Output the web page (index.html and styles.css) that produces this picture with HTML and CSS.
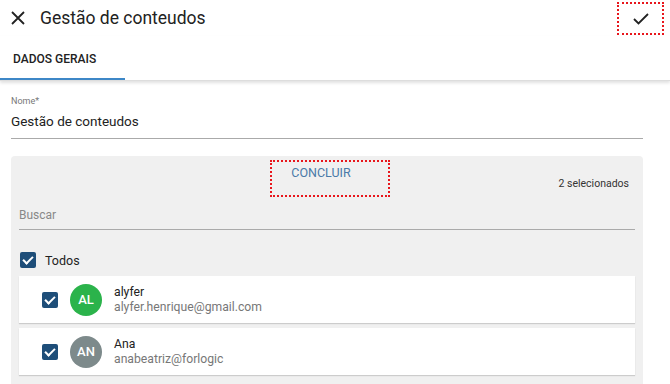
FILE: index.html
```html
<!DOCTYPE html>
<html lang="pt">
<head>
  <meta charset="UTF-8">
  <title>Gestão de conteudos</title>
  <link rel="stylesheet" href="styles.css">
</head>
<body>
  <header class="topbar">
    <div class="topbar-left">
      <svg class="icon-close" width="14" height="14" viewBox="0 0 14 14">
        <path d="M1 1 L13 13 M13 1 L1 13" stroke="#222" stroke-width="1.8" fill="none"/>
      </svg>
      <h1>Gestão de conteudos</h1>
    </div>
    <button class="btn-save">
      <svg width="16" height="12" viewBox="0 0 16 12">
        <path d="M1 6 L5.5 10.5 L15 1" stroke="#222" stroke-width="1.8" fill="none"/>
      </svg>
    </button>
  </header>

  <nav class="tabs">
    <div class="tab active">DADOS GERAIS</div>
  </nav>

  <main class="content">
    <div class="field">
      <label>Nome*</label>
      <div class="field-value">Gestão de conteudos</div>
    </div>

    <section class="panel">
      <div class="panel-head">
        <span></span>
        <button class="btn-done">CONCLUIR</button>
        <span class="count">2 selecionados</span>
      </div>

      <div class="search">Buscar</div>

      <div class="check-all">
        <span class="checkbox"></span>
        <span>Todos</span>
      </div>

      <div class="user">
        <span class="checkbox"></span>
        <span class="avatar green">AL</span>
        <div class="user-info">
          <div class="user-name">alyfer</div>
          <div class="user-mail">alyfer.henrique@gmail.com</div>
        </div>
      </div>

      <div class="user">
        <span class="checkbox"></span>
        <span class="avatar grey">AN</span>
        <div class="user-info">
          <div class="user-name">Ana</div>
          <div class="user-mail">anabeatriz@forlogic</div>
        </div>
      </div>
    </section>
  </main>
</body>
</html>
```

FILE: styles.css
```css
body {
  margin: 0;
  background: #fff;
  color: #222;
  font-family: Roboto, "Noto Sans", sans-serif;
  overflow: hidden;
}

.topbar {
  display: flex;
  align-items: center;
  justify-content: space-between;
  height: 36px;
  padding: 0 6px 0 11px;
}

.topbar-left {
  display: flex;
  align-items: center;
  gap: 15px;
}

.topbar h1 {
  margin: 0;
  font-size: 17.5px;
  font-weight: 400;
  color: #222;
}

.btn-save {
  width: 47px;
  height: 33px;
  margin-top: 1px;
  display: flex;
  align-items: center;
  justify-content: center;
  background: none;
  border: 2px dotted #e8161c;
  padding: 0;
}

.tabs {
  height: 44px;
  display: flex;
  border-bottom: 1px solid #ddd;
  box-shadow: 0 2px 3px rgba(0, 0, 0, 0.12);
}

.tab {
  width: 125px;
  box-sizing: border-box;
  padding: 16px 0 0 13px;
  font-size: 12px;
  font-weight: 500;
  color: #222;
}

.tab.active {
  border-bottom: 2px solid #3d87c7;
}

.content {
  padding: 14px 27px 0 11px;
}

.field label {
  display: block;
  font-size: 9px;
  color: #777;
  line-height: 12px;
}

.field-value {
  font-size: 13.5px;
  line-height: 18px;
  padding: 5px 0 8px;
  border-bottom: 1px solid #aaa;
}

.panel {
  margin-top: 17px;
  background: #f0f0f0;
  border-radius: 4px;
  padding: 4px 8px 10px;
}

.panel-head {
  display: grid;
  grid-template-columns: 1fr auto 1fr;
  align-items: end;
}

.btn-done {
  width: 120px;
  height: 37px;
  margin-left: 6px;
  background: none;
  border: 2px dotted #e8161c;
  color: #4a7aa8;
  font-family: Roboto, sans-serif;
  font-size: 12.5px;
  padding: 0 18px 12px 0;
}

.count {
  text-align: right;
  font-size: 10.5px;
  color: #333;
  padding: 0 6px 7px 0;
}

.search {
  margin-top: 11px;
  font-size: 12px;
  color: #888;
  padding-bottom: 7px;
  border-bottom: 1px solid #aaa;
}

.check-all {
  display: flex;
  align-items: center;
  gap: 9px;
  height: 32px;
  margin-top: 14px;
  padding-left: 1px;
  font-size: 12.5px;
}

.checkbox {
  width: 16px;
  height: 16px;
  border-radius: 2px;
  background: #1e4e79;
  position: relative;
  flex: none;
}

.checkbox::after {
  content: "";
  position: absolute;
  left: 5px;
  top: 2px;
  width: 4px;
  height: 8px;
  border: solid #fff;
  border-width: 0 2px 2px 0;
  transform: rotate(45deg);
}

.user {
  display: flex;
  align-items: center;
  height: 47px;
  margin-bottom: 5px;
  padding-left: 23px;
  background: #fff;
  box-shadow: 0 1px 1px rgba(0, 0, 0, 0.15);
}

.avatar {
  width: 32px;
  height: 32px;
  border-radius: 50%;
  margin-left: 12px;
  display: flex;
  align-items: center;
  justify-content: center;
  color: #fff;
  font-size: 13px;
  font-weight: 500;
}

.avatar.green {
  background: #2bb34b;
}

.avatar.grey {
  background: #7d8a8b;
}

.user-info {
  margin-left: 12px;
  font-size: 12.2px;
  line-height: 15px;
}

.user-mail {
  color: #777;
}
```
